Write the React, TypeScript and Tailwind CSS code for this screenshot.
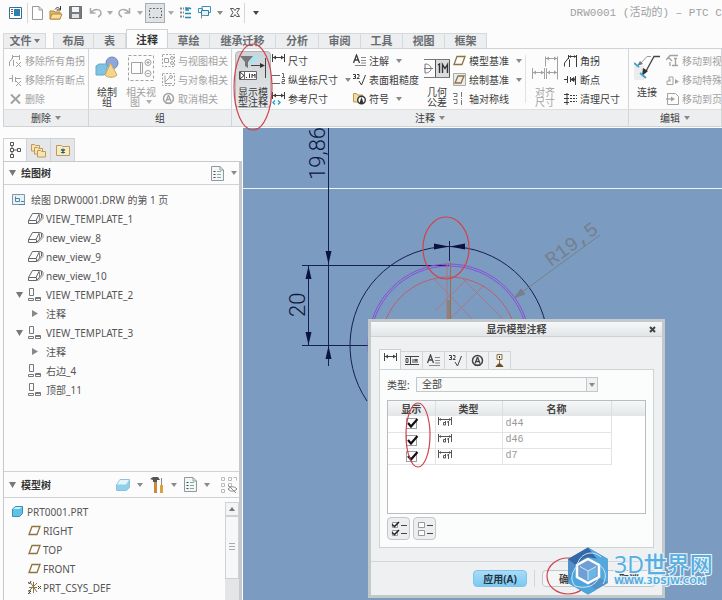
import React from "react";

type Kids = { children?: React.ReactNode };

function Svg({ w, h, children, cls = "" }: Kids & { w: number; h: number; cls?: string }) {
  return (
    <svg width={w} height={h} viewBox={`0 0 ${w} ${h}`} fill="none" stroke="currentColor" className={"shrink-0 " + cls} aria-hidden="true">
      {children}
    </svg>
  );
}

function Caret({ cls = "text-[#8a8a8a]" }: { cls?: string }) {
  return (
    <Svg w={6} h={4} cls={cls}>
      <path d="M0 0h6L3 4z" fill="currentColor" stroke="none" />
    </Svg>
  );
}

/* ---------- small icons ---------- */

const CornerIcon = () => (
  <Svg w={13} h={13}>
    <path d="M.5 12.500V9L4.500 4M4.500 1v4M12.500 13V1M5.500 13V5.500M5 2.500h7" />
    <path d="M5 2.500l2-1.500v3zM12 2.500l-2-1.500v3z" fill="currentColor" stroke="none" />
  </Svg>
);
const CornerXIcon = () => (
  <Svg w={13} h={13}>
    <path d="M.5 12V8L3.500 4M3.500 1v4M10.500 1v5M4 2.500h6M4.500 6v6M7 8l5 5M12 8l-5 5" />
  </Svg>
);
const BreakXIcon = () => (
  <Svg w={13} h={13}>
    <path d="M0 5.500h3M3.500 2v7M6.500 4v5M6 5.500h6M7 8l5 5M12 8l-5 5" />
  </Svg>
);
const BreakIcon = () => (
  <Svg w={13} h={13}>
    <path d="M0 6.500h3M3.500 3v7M6.500 4v5M6 6.500h5M11.500 3v9" />
    <path d="M7 6.500l3-2v4z" fill="currentColor" />
  </Svg>
);
const CrossIcon = () => (
  <Svg w={13} h={13}>
    <path d="M2 2.500l9 9M11 2.500l-9 9" strokeWidth="2" />
  </Svg>
);
const RelViewIcon = () => (
  <Svg w={13} h={13}>
    <path d="M.5.500h12v12H.5z" strokeDasharray="2 1.500" />
    <path d="M2.500 4.500h4v4h-4z" />
    <circle cx="10" cy="4" r="1.500" />
    <circle cx="10" cy="9" r="1.500" />
  </Svg>
);
const RelObjIcon = () => (
  <Svg w={13} h={13}>
    <path d="M.5.500h12v12H.5z" strokeDasharray="2 1.500" />
    <path d="M3 2.500v8h7M3 9l4-4" />
    <circle cx="9" cy="4" r="1.500" />
  </Svg>
);
const SymbolIcon = () => (
  <Svg w={13} h={13}>
    <circle cx="6.500" cy="6.500" r="5" strokeWidth="1.500" />
    <path d="M6.500 3L9 9.500M6.500 3L4 9.500M5 7.500h3" strokeWidth="1.300" />
    <path d="M3 10.500h7L9 12H4z" fill="currentColor" stroke="none" />
  </Svg>
);
const DimIcon = () => (
  <Svg w={13} h={13}>
    <path d="M.5 0v8M12.500 0v8M1 3.500h11" />
    <path d="M1 3.500l3-2v4zM12 3.500l-3-2v4z" fill="currentColor" stroke="none" />
  </Svg>
);
const OrdinateIcon = () => (
  <Svg w={13} h={13}>
    <path d="M0 2.500h8M0 10.500h8M10 .5h1.500V4M10 4.500h3M10 6.500h2.500v2H10v2h3" stroke="#666" />
  </Svg>
);
const RefDimIcon = () => (
  <Svg w={13} h={13}>
    <path d="M.5 0v7M12.500 0v7M1 3.500h11" />
    <path d="M1 3.500l3-2v4zM12 3.500l-3-2v4z" fill="currentColor" stroke="none" />
    <path d="M3 8.500l-2 2 2 2M6 8.500l2 2-2 2" stroke="#2aa5d0" strokeWidth="1.500" />
  </Svg>
);
const NoteIcon = () => (
  <Svg w={13} h={13}>
    <path d="M.5 9L3.500 1l3 8M1.500 6h4" strokeWidth="1.300" />
    <path d="M8 3.500h5M8 6.500h5M2 11.500h11M8 9h5" stroke="#888" />
  </Svg>
);
const RoughIcon = () => (
  <Svg w={13} h={13}>
    <path d="M0 1.500h2.500v2H1h1.500v2H0M4 1.500h2v2l-2 2h2.500M6 8l2.500 4L12.500 2" />
  </Svg>
);
const FolderSymbolIcon = () => (
  <Svg w={13} h={13}>
    <path d="M.5 10V1.500h3l1 1.500h5v7z" fill="#f7dca0" stroke="#b99a55" />
    <circle cx="8.500" cy="8" r="3.800" fill="#fff" stroke="#333" strokeWidth="1.400" />
    <path d="M8.500 5l2 6h-4z" fill="#333" stroke="none" />
  </Svg>
);
const PlaneIcon = () => (
  <Svg w={13} h={13}>
    <path d="M4 2.500h8L9 10.500H1z" stroke="#8d7440" strokeWidth="1.300" />
  </Svg>
);
const DraftPlaneIcon = () => (
  <Svg w={13} h={13}>
    <path d="M.5.500h12v12H.5z" fill="#ececec" stroke="#aaa" />
    <path d="M5 3h6L8 10H2z" stroke="#8d7440" strokeWidth="1.300" />
  </Svg>
);
const AxisIcon = () => (
  <Svg w={13} h={13}>
    <path d="M0 1.500h4v3H1M0 7.500h4v4H1M8.500 0v5M8.500 6v1M8.500 8v5" stroke="#777" />
  </Svg>
);
const CleanIcon = () => (
  <Svg w={13} h={13}>
    <path d="M0 2.500h5M0 6.500h5M0 10.500h5M3 1v12" />
    <path d="M6 3.500h7M6 6.500h7M6 9.500h7" strokeDasharray="2 1" />
  </Svg>
);
const MoveViewIcon = () => (
  <Svg w={13} h={13}>
    <path d="M0 6l4-4.500h8M2 3l4 4M9.500 4v7M8 4.500h3M6 11.500h6M4 8v4" strokeWidth="1.300" />
  </Svg>
);
const MoveSpecialIcon = () => (
  <Svg w={13} h={13}>
    <path d="M1 11.500V8h2V4h4v7.500zM4 6v3" />
    <path d="M9 6l4 2.500L9 11z" fill="currentColor" stroke="none" />
  </Svg>
);
const MovePageIcon = () => (
  <Svg w={13} h={13}>
    <path d="M1.500 1.500h8l3 3v8h-11z" />
    <path d="M0 7h6" strokeWidth="1.300" />
    <path d="M5 4.500L9 7 5 9.500z" fill="currentColor" stroke="none" />
  </Svg>
);

/* ---------- ribbon building blocks ---------- */

function Tool({ icon, label, off, caret }: { icon: React.ReactNode; label: string; off?: boolean; caret?: boolean }) {
  return (
    <button className={"flex h-[19px] items-center gap-[3px] whitespace-nowrap text-left " + (off ? "text-[#a2a2a2]" : "text-[#3c3c3c]")}>
      {icon}
      <span>{label}</span>
      {caret && (
        <span className="ml-1">
          <Caret />
        </span>
      )}
    </button>
  );
}

function BigTool({ icon, children, off, cls }: Kids & { icon: React.ReactNode; off?: boolean; cls: string }) {
  return (
    <button className={"flex flex-col items-center pt-[2px] leading-[10px] " + cls + (off ? " text-[#a2a2a2]" : " text-[#3c3c3c]")}>
      <span className="flex h-[30px] items-center">{icon}</span>
      <span className="pt-1">{children}</span>
    </button>
  );
}

function Group({ title, caret, cls, children }: Kids & { title: string; caret?: boolean; cls: string }) {
  return (
    <section className={"flex flex-col border-r border-[#d3d6d8] " + cls}>
      <div className="flex flex-1 items-start pt-[2px]">{children}</div>
      <div className="flex h-[17px] shrink-0 items-center justify-center gap-1 border-t border-[#dcdfe1] bg-[#eceef0] text-[#3c3c3c]">
        {title}
        {caret && <Caret />}
      </div>
    </section>
  );
}

function Ribbon() {
  return (
    <div className="ml-[3px] flex h-[79px] overflow-hidden border-b border-l border-t border-[#cfd3d5] bg-[#fcfcfd]">
      <Group title="删除" caret cls="w-[85px] shrink-0">
        <div className="flex flex-col pl-[5px]">
          <Tool off icon={<CornerXIcon />} label="移除所有角拐" />
          <Tool off icon={<BreakXIcon />} label="移除所有断点" />
          <Tool off icon={<CrossIcon />} label="删除" />
        </div>
      </Group>

      <Group title="组" cls="w-[143px] shrink-0">
        <BigTool
          cls="w-[36px]"
          icon={
            <Svg w={24} h={24}>
              <circle cx="17" cy="7" r="6" fill="#8da6dd" stroke="#6f86b8" />
              <path d="M1 10l3-2h8v8l-3 3H1z" fill="#7cc3e4" stroke="#6aa7c4" />
              <path d="M15.500 7l6.500 12c-2 3-10 3-12 0z" fill="#f5d48c" stroke="#c9a65c" />
            </Svg>
          }
        >
          绘制
          <br />组
        </BigTool>
        <BigTool
          off
          cls="w-[32px]"
          icon={
            <Svg w={26} h={26}>
              <path d="M.5.500h25v25H.5z" strokeDasharray="3 2" />
              <path d="M3.500 7.500h11v11h-11zM12.500 7.500v11" />
              <circle cx="20" cy="7.500" r="3" />
              <circle cx="20" cy="18.500" r="3" />
              <path d="M18.500 7.500h3M20 6v3M18.500 18.500h3" />
            </Svg>
          }
        >
          相关视
          <br />
          <span className="inline-flex items-center gap-[6px]">
            图 <Caret cls="text-[#b0b0b0]" />
          </span>
        </BigTool>
        <div className="flex flex-col pl-[5px]">
          <Tool off icon={<RelViewIcon />} label="与视图相关" />
          <Tool off icon={<RelObjIcon />} label="与对象相关" />
          <Tool off icon={<SymbolIcon />} label="取消相关" />
        </div>
      </Group>

      <Group title="注释" caret cls="w-[397px] shrink-0">
        <BigTool
          cls="ml-[3px] h-[57px] w-[36px] rounded-sm border border-[#b4b7b9] bg-linear-to-b from-[#cfd3d5] to-[#e6e8ea]"
          icon={
            <Svg w={30} h={27}>
              <path d="M14 1h10L10 12z" fill="#a9e2f3" stroke="none" />
              <path d="M2 1h13l-5 6v6l-3-2V7z" fill="#777" stroke="none" />
              <path d="M13 10.500h13M27.500 3v20" stroke="#444" />
              <path d="M22 8l5 2.500-5 2.500z" fill="#333" stroke="none" />
              <path d="M1.500 16.500h17v8h-17zM6.500 16.500v8" fill="#fff" stroke="#666" />
              <path d="M2 17l4 3.500L2 24zM8 22.500h1M11.500 18.500v4.500M14 23v-4l1.500 2 1.500-2v4" stroke="#333" />
            </Svg>
          }
        >
          显示模
          <br />
          型注释
        </BigTool>
        <div className="flex w-[82px] flex-col pl-[1px]">
          <Tool icon={<DimIcon />} label="尺寸" />
          <Tool icon={<OrdinateIcon />} label="纵坐标尺寸" caret />
          <Tool icon={<RefDimIcon />} label="参考尺寸" />
        </div>
        <div className="flex w-[68px] flex-col">
          <Tool icon={<NoteIcon />} label="注解" caret />
          <Tool icon={<RoughIcon />} label="表面粗糙度" />
          <Tool icon={<FolderSymbolIcon />} label="符号" caret />
        </div>
        <BigTool
          cls="w-[32px]"
          icon={
            <Svg w={26} h={19}>
              <path d="M0 .5h26M0 18.500h26" stroke="#777" />
              <path d="M11 1h15v17H11z" fill="#d9dbdc" stroke="none" />
              <path d="M11.500 1v17M25.500 1v17" stroke="#555" />
              <path d="M1 5v9M1 5c8 0 8 9 0 9M0 9.500h9" stroke="#777" />
              <path d="M14 6l1.500-1v9M18.500 14V5.500l2.500 4 2.500-4V14" stroke="#333" strokeWidth="1.400" />
            </Svg>
          }
        >
          几何
          <br />
          公差
        </BigTool>
        <div className="flex w-[72px] flex-col">
          <Tool icon={<PlaneIcon />} label="模型基准" caret />
          <Tool icon={<DraftPlaneIcon />} label="绘制基准" caret />
          <Tool icon={<AxisIcon />} label="轴对称线" />
        </div>
        <div className="mt-1 h-[48px] border-r border-[#dfe1e3]" />
        <BigTool
          off
          cls="w-[38px]"
          icon={
            <Svg w={26} h={24}>
              <path d="M13.500.500v10M25.500.500v23M14 2.500h11M.5 12v11M12.500 12v11M.5 16.500h12M14.500 12v11M15 16.500h10" />
              <path d="M1 16.500l3-2v4zM12 16.500l-3-2v4zM15 16.500l3-2v4zM25 16.500l-3-2v4zM14 2.500l3-2v4zM25 2.500l-3-2v4z" fill="currentColor" stroke="none" />
            </Svg>
          }
        >
          对齐
          <br />
          尺寸
        </BigTool>
        <div className="flex flex-col">
          <Tool icon={<CornerIcon />} label="角拐" />
          <Tool icon={<BreakIcon />} label="断点" />
          <Tool icon={<CleanIcon />} label="清理尺寸" />
        </div>
      </Group>

      <Group title="编辑" caret cls="min-w-0 flex-1 overflow-hidden">
        <BigTool
          cls="w-[36px] shrink-0"
          icon={
            <Svg w={26} h={26}>
              <path d="M0 11h10v14H0z" fill="#ececec" stroke="none" />
              <path d="M17 1.500h-4L6 9" stroke="#999" />
              <path d="M26 1.500h-6L11 18" stroke="#444" strokeWidth="1.300" />
              <path d="M3 11l3-5 3 3z" fill="#777" stroke="none" />
              <path d="M8 21l1-8 5 3z" fill="#333" stroke="none" />
              <path d="M0 8l5 4M6 18l6 5" stroke="#35a7d8" strokeWidth="1.800" />
            </Svg>
          }
        >
          连接
        </BigTool>
        <div className="flex flex-col pl-[1px]">
          <Tool off icon={<MoveViewIcon />} label="移动到视图" />
          <Tool off icon={<MoveSpecialIcon />} label="移动特殊" />
          <Tool off icon={<MovePageIcon />} label="移动到页面" />
        </div>
      </Group>
    </div>
  );
}

/* ---------- title bar with the quick access buttons ---------- */

function Quick({ cls, label, children }: Kids & { cls: string; label: string }) {
  return (
    <button aria-label={label} className={"flex h-[20px] shrink-0 items-center justify-center " + cls}>
      {children}
    </button>
  );
}

function TitleBar() {
  return (
    <header className="flex h-[25px] shrink-0 items-center overflow-hidden pl-[3px] text-[#555]">
      <Quick cls="w-[25px] border-r border-[#d4d7d9]" label="窗口">
        <Svg w={13} h={12}>
          <path d="M.5.500h12v11H.5z" fill="#fff" stroke="#3c6d8c" />
          <path d="M2 2h2v1H2zM2 4h2v1H2zM2 6h2v1H2z" fill="#3c6d8c" stroke="none" />
          <path d="M5 2h6v7H5z" fill="#2c7fb0" stroke="none" />
        </Svg>
      </Quick>
      <Quick cls="w-[19px]" label="新建">
        <Svg w={11} h={14}>
          <path d="M.5.500H7L10.500 4v9.500H.5zM7 .5V4h3.500" fill="#fff" stroke="#999" />
        </Svg>
      </Quick>
      <Quick cls="w-[18px]" label="打开">
        <Svg w={14} h={14}>
          <path d="M1 13V5h4l1 1h5v7z" fill="#e8b860" stroke="#b38a3f" />
          <path d="M1 13l2-5h10l-2 5z" fill="#fbdf9e" stroke="#b38a3f" />
          <path d="M6 3.500c2-3 4-2 5 0M11.500 0v4h-4" stroke="#333" />
        </Svg>
      </Quick>
      <Quick cls="w-[21px]" label="保存">
        <Svg w={13} h={13}>
          <path d="M.5.500h12v12H.5z" fill="#777c80" stroke="#6a6f73" />
          <path d="M3 1h7v5H3z" fill="#f4f6f7" stroke="none" />
          <path d="M3 8h7v4H3z" fill="#dfe3e6" stroke="none" />
        </Svg>
      </Quick>
      <Quick cls="w-[18px]" label="撤消">
        <Svg w={13} h={10} cls="text-[#aaa]">
          <path d="M1.500 0v5h5M2 5c3-5 10-4 10 0 0 2-1 3-3 4" strokeWidth="1.500" />
        </Svg>
      </Quick>
      <Quick cls="w-[11px]" label="撤消列表"><Caret cls="text-[#aaa]" /></Quick>
      <Quick cls="w-[19px]" label="重做">
        <Svg w={13} h={10} cls="text-[#aaa]">
          <path d="M11.500 0v5h-5M11 5C8 0 1 1 1 5c0 2 1 3 3 4" strokeWidth="1.500" />
        </Svg>
      </Quick>
      <Quick cls="w-[11px]" label="重做列表"><Caret cls="text-[#aaa]" /></Quick>
      <Quick cls="w-[20px] border border-[#a9adb0] bg-[#e0e3e5]" label="选择">
        <Svg w={13} h={10}>
          <path d="M.5.500h12v9H.5z" strokeDasharray="2 1.500" stroke="#666" />
        </Svg>
      </Quick>
      <Quick cls="w-[11px]" label="选择方式"><Caret cls="text-[#aaa]" /></Quick>
      <Quick cls="w-[19px]" label="重新生成">
        <Svg w={13} h={13}>
          <path d="M1 2.500h4M1 6.500h4M1 10.500h4" stroke="#888" strokeWidth="2" strokeDasharray="2 1" />
          <path d="M7 1v3h3M7 4c1-3 4-2 5-1M6 7.500h6M6 11.500h6" stroke="#2389b5" strokeWidth="1.400" />
        </Svg>
      </Quick>
      <Quick cls="w-[19px]" label="窗口列表">
        <Svg w={13} h={13}>
          <path d="M4 .5h8.500v6H4zM.5 2.500h4v4h-4z" stroke="#3d91b8" fill="#fff" />
          <path d="M3.500 4.500h7v5h-7z" stroke="#2b7fa8" fill="#dff1f9" />
          <path d="M3.500 12.500v-3h5" stroke="#888" />
        </Svg>
      </Quick>
      <Quick cls="w-[11px]" label="更多窗口"><Caret /></Quick>
      <Quick cls="w-[20px] border-r border-[#d4d7d9]" label="关闭窗口">
        <Svg w={10} h={9}>
          <path d="M.5.500h3L5 2.500 6.500.500h3L7 4.500l2.500 4h-3L5 6.500l-1.500 2h-3L3 4.500z" stroke="#555" />
        </Svg>
      </Quick>
      <Quick cls="w-[22px]" label="自定义工具栏"><Caret cls="text-[#444]" /></Quick>
      <h1 className="ml-auto w-[152px] shrink-0 overflow-hidden whitespace-nowrap font-[Liberation_Mono,Noto_Sans_CJK_SC,monospace] text-[11px] text-[#a0a0a0]">
        DRW0001 (活动的) – PTC Creo
      </h1>
    </header>
  );
}

function MenuTabs() {
  const tab = "h-[15px] shrink-0 border-r border-t border-[#d6d9db] bg-[#eceef0] leading-[14px]";
  return (
    <nav className="flex h-[23px] shrink-0 items-end pl-[3px] text-[11px] font-bold text-[#6a6d70]">
      <button className={tab + " mr-[7px] flex w-[43px] items-center justify-center gap-[2px] border-l"}>
        文件 <Caret cls="text-[#777]" />
      </button>
      <button className={tab + " w-[41px] border-l"}>布局</button>
      <button className={tab + " w-[32px]"}>表</button>
      <button className="h-[19px] w-[42px] shrink-0 border-x border-t border-[#cfd3d5] bg-[#fcfcfd] pt-[2px] leading-[16px] text-[#333]">注释</button>
      <button className={tab + " w-[42px]"}>草绘</button>
      <button className={tab + " w-[66px]"}>继承迁移</button>
      <button className={tab + " w-[43px]"}>分析</button>
      <button className={tab + " w-[42px]"}>审阅</button>
      <button className={tab + " w-[42px]"}>工具</button>
      <button className={tab + " w-[42px]"}>视图</button>
      <button className={tab + " w-[42px]"}>框架</button>
    </nav>
  );
}

/* ---------- side bar ---------- */

const ViewIcon = () => (
  <Svg w={16} h={13} cls="text-[#666]">
    <path d="M4.500 1.500h7L8 8.500H.5zM.5 8.500v3h8V8.500M8.500 11.500l5-5.500V2l-2-.5" />
    <path d="M13.500 2l1.500 1v3.500L9.500 12M11.500 3v5" stroke="#888" />
  </Svg>
);
const MultiViewIcon = () => (
  <Svg w={14} h={13} cls="text-[#777]">
    <path d="M1.500.500h4v7h-4zM.5 10.500h5v2h-5zM7.500 9.500h5v3h-5zM7.500 10.500h5" />
  </Svg>
);
const SheetIcon = () => (
  <Svg w={14} h={12}>
    <path d="M.5.500h12v10H.5z" fill="#e8f1f6" stroke="#8195a3" />
    <path d="M3.500 2.500v5h4v-3h-4M9 7.500h3M7 10.500h6" stroke="#4c86a8" />
  </Svg>
);
const ListIcon = () => (
  <Svg w={13} h={15}>
    <path d="M.5.500H9L12.500 4v10.500H.5zM9 .5V4h3.500" fill="#f4f7f8" stroke="#92999e" />
    <path d="M2.500 5.500h2M2.500 8.500h2M2.500 11.500h2" stroke="#444" />
    <path d="M6 5.500h4M6 8.500h4M6 11.500h4" stroke="#7fae9d" />
  </Svg>
);
const Down = () => (
  <Svg w={7} h={6}>
    <path d="M0 0h7L3.500 6z" fill="#777" stroke="none" />
  </Svg>
);
const Right = () => (
  <Svg w={6} h={7}>
    <path d="M0 0v7l6-3.500z" fill="#888" stroke="none" />
  </Svg>
);

type Row = { label: string; kind: "view" | "multi" | "open" | "note" };
const drawingRows: Row[] = [
  { label: "VIEW_TEMPLATE_1", kind: "view" },
  { label: "new_view_8", kind: "view" },
  { label: "new_view_9", kind: "view" },
  { label: "new_view_10", kind: "view" },
  { label: "VIEW_TEMPLATE_2", kind: "open" },
  { label: "注释", kind: "note" },
  { label: "VIEW_TEMPLATE_3", kind: "open" },
  { label: "注释", kind: "note" },
  { label: "右边_4", kind: "multi" },
  { label: "顶部_11", kind: "multi" },
];

function TreeRow({ row }: { row: Row }) {
  return (
    <li className="flex h-[19px] items-center">
      <span className="flex w-[24px] shrink-0 justify-center pl-[6px]">{row.kind === "open" && <Down />}</span>
      <span className="flex w-[18px] shrink-0 items-center justify-start">
        {row.kind === "view" && <ViewIcon />}
        {(row.kind === "open" || row.kind === "multi") && <MultiViewIcon />}
        {row.kind === "note" && (
          <span className="pl-[4px]">
            <Right />
          </span>
        )}
      </span>
      <span>{row.label}</span>
    </li>
  );
}

function SideBar() {
  const tab = "flex h-[23px] w-[24px] items-center justify-center border-r border-t border-[#d0d3d5]";
  return (
    <aside className="flex w-[243px] shrink-0 flex-col pl-[3px] pt-[11px] text-[#555]">
      <div className="flex shrink-0" role="tablist">
        <button role="tab" aria-label="模型树" className={tab + " border-l"}>
          <Svg w={12} h={16} cls="text-[#555]">
            <path d="M1.500.500h3v3h-3zM1.500 6.500h3v3h-3zM1.500 12.500h3v3h-3zM8.500 6.500h3v3h-3zM3 4v2M3 10v2M5 8h3" />
          </Svg>
        </button>
        <button role="tab" aria-label="文件夹浏览器" className={tab + " bg-[#e4e6e8]"}>
          <Svg w={16} h={15}>
            <path d="M.5 8V1.500h3l1 1h4V8z" fill="#fbe3ae" stroke="#b99a63" />
            <path d="M3.500 11V4.500h3l1 1h4V11z" fill="#fbe3ae" stroke="#b99a63" />
            <path d="M6.500 14V7.500h3l1 1h4V14z" fill="#fbe3ae" stroke="#b99a63" />
          </Svg>
        </button>
        <button role="tab" aria-label="收藏夹" className={tab + " bg-[#e4e6e8]"}>
          <Svg w={14} h={12}>
            <path d="M.5 11.500V1.500h5l1 1h7v9z" fill="#fbe9bf" stroke="#b99a63" />
            <path d="M7 4.500v5M5 5.500l4 3M9 5.500l-4 3" stroke="#1f5f70" strokeWidth="1.200" />
          </Svg>
        </button>
      </div>

      <div className="mr-[1px] flex min-h-0 flex-1 flex-col border-l border-r-[3px] border-t border-[#c6cacd] bg-[#fcfcfd]">
        <div className="flex h-[23px] shrink-0 items-center border-b border-[#cfd3d5] pl-[5px] pr-[2px]">
          <Down />
          <h2 className="ml-[5px] font-bold text-[#333]">绘图树</h2>
          <button aria-label="设置" className="ml-auto flex items-center gap-[7px]">
            <ListIcon />
            <Caret />
          </button>
        </div>
        <ul className="min-h-0 flex-1 overflow-hidden pt-[5px]">
          <li className="flex h-[19px] items-center gap-[5px] pl-[8px]">
            <SheetIcon />
            绘图 DRW0001.DRW 的第 1 页
          </li>
          {drawingRows.map((r, i) => (
            <TreeRow key={i} row={r} />
          ))}
        </ul>

        <div className="flex h-[27px] shrink-0 items-center border-b border-t border-[#cfd3d5] pl-[5px] pr-[2px]">
          <Down />
          <h2 className="ml-[5px] font-bold text-[#333]">模型树</h2>
          <div className="ml-auto flex items-center gap-[7px]">
            <button aria-label="显示" className="flex items-center gap-[6px]">
              <Svg w={16} h={14}>
                <path d="M5 1.500h9.500v8l-3 3H1.500V7z" fill="#8fd0ec" stroke="#8fc1d8" strokeLinejoin="round" />
                <path d="M5 2h9l-3 4.500H2z" fill="#e2f5fb" stroke="none" />
              </Svg>
              <Caret />
            </button>
            <button aria-label="工具" className="flex items-center gap-[7px]">
              <Svg w={14} h={16}>
                <path d="M0 2l3-2h5l2 3H7v2H3V3z" fill="#555" stroke="none" />
                <path d="M4 5h3v11H4z" fill="#c98a3c" stroke="none" />
                <path d="M11.500 1v7" stroke="#888" />
                <path d="M10 8h3v8h-3z" fill="#dba040" stroke="none" />
              </Svg>
              <Caret />
            </button>
            <button aria-label="设置" className="flex items-center gap-[7px]">
              <ListIcon />
              <Caret />
            </button>
            <button aria-label="过滤" className="ml-1">
              <Svg w={16} h={16} cls="text-[#bbb]">
                <path d="M.5.500h3v3h-3zM.5 6.500h3v3h-3zM.5 12.500h3v3h-3zM7.500.500h3v3h-3zM7.500 6.500h3v3h-3zM12.500.500h3v3" />
                <path d="M7 12c3-3 6-3 9 0-3 3-6 3-9 0M7 8l8 8" stroke="#888" />
              </Svg>
            </button>
          </div>
        </div>
        <div className="flex h-[102px] shrink-0 pt-[4px]">
          <ul className="min-w-0 flex-1 overflow-hidden">
            <li className="flex h-[19px] items-center gap-[4px] pl-[8px]">
              <Svg w={11} h={11}>
                <path d="M.5 3l3-2.500h7v7l-3 3h-7z" fill="#5fc3e6" stroke="#3b8fb0" />
                <path d="M1 3l3-2h6L7.500 3z" fill="#c8effa" stroke="none" />
              </Svg>
              PRT0001.PRT
            </li>
            {["RIGHT", "TOP", "FRONT"].map((n) => (
              <li key={n} className="flex h-[19px] items-center gap-[2px] pl-[24px]">
                <PlaneIcon />
                {n}
              </li>
            ))}
            <li className="flex h-[19px] items-center gap-[2px] pl-[24px]">
              <Svg w={13} h={13}>
                <path d="M5.500 1v11M1 6.500h8M2 1l7 10M9 2L1 10" stroke="#8d7440" />
                <path d="M0 1l1.500 2L3 0M0 10h3l-3 3h3M10 5l3 3M13 5l-3 3" stroke="#444" />
              </Svg>
              PRT_CSYS_DEF
            </li>
          </ul>
          <div className="flex w-[14px] shrink-0 flex-col bg-[#e3e5e7]">
            <button aria-label="向上滚动" className="flex h-[14px] items-center justify-center border border-[#cfd2d4] bg-[#f3f4f5]">
              <Svg w={6} h={4}>
                <path d="M0 4h6L3 0z" fill="#777" stroke="none" />
              </Svg>
            </button>
            <div className="flex h-[63px] items-center justify-center border border-[#cfd2d4] bg-[#f6f7f8]">
              <Svg w={6} h={9} cls="text-[#aaa]">
                <path d="M0 .5h6M0 3.500h6M0 6.500h6" />
              </Svg>
            </div>
          </div>
        </div>
      </div>
    </aside>
  );
}

/* ---------- drawing; page units shifted so the sheet's own corner is 243,128 ---------- */

function Sheet() {
  return (
    <svg className="absolute inset-0 h-full w-full" fill="none" aria-label="图纸">
      <rect y="60" width="100%" height="1" fill="#eef3f8" />
      <g transform="translate(-243 -128)">
        <g stroke="#14204f">
          <path d="M328.500 120v246M302 265.500h147M302 345.500h68M308.500 266v80" />
          <path d="M367 401A99 99 0 1 1 531 401" />
          <path d="M449.500 241v20" />
        </g>
        <g fill="#0b1440">
          <path d="M328.500 264l-3-13h6zM328.500 346l-3 13h6zM308.500 266l-3 13h6zM308.500 345l-3-13h6zM449 246.500l-15-3v6zM450 246.500l15-3v6z" />
          <g className="font-[Roboto,sans-serif] text-[22px] font-light">
            <text transform="translate(325 180) rotate(-90)">19,86</text>
            <text transform="translate(305 317) rotate(-90)">20</text>
          </g>
        </g>
        <circle cx="449" cy="345" r="81" stroke="#8a4fd6" />
        <circle cx="449" cy="345" r="79" stroke="#8a4fd6" />
        <circle cx="449" cy="345" r="68" stroke="#b9606c" />
        <path d="M434 279l40 42M484 285l-36 36M466 280l-31 31M462 278l42 42M447 262v60" stroke="#a87888" />
        <path d="M450.500 262v60" stroke="#a06c50" />
        <path d="M448.500 300v20" stroke="#8c8478" strokeWidth="3" />
        <g stroke="#77808c">
          <path d="M600 235l-86 63" />
          <path d="M514 298l7-9 4 5z" fill="#77808c" />
        </g>
        <text transform="translate(551 267) rotate(-36)" fill="#74808f" className="font-[Liberation_Mono,monospace] text-[20px]">R19,5</text>
      </g>
    </svg>
  );
}

/* ---------- dialog ---------- */

const DimRowIcon = () => (
  <Svg w={14} h={9} cls="text-[#555]">
    <path d="M.5 0v8M13.500 0v8M1 2.500h12M5.500 8V5.500h2V8h-2M7.500 4v4M10.500 4v5M9 5h1" />
    <path d="M1 2.500l2-1.500v3zM13 2.500l-2-1.500v3z" fill="currentColor" stroke="none" />
  </Svg>
);

function Dialog() {
  const tab = "flex h-[18px] w-[22px] items-center justify-center border-r border-t border-[#d3d6d8] bg-[#eff1f2]";
  const push = "h-[17px] rounded-sm border font-bold";
  return (
    <section
      role="dialog"
      aria-label="显示模型注释"
      className="absolute left-[125px] top-[191px] w-[297px] border-[3px] border-[#c3c8cb] bg-[#eef0f2] text-[#444]"
    >
      <div className="relative flex h-[15px] items-center justify-center border-b border-[#cfd2d4] bg-linear-to-b from-[#f6f7f8] to-[#e2e5e7]">
        <h2 className="font-bold">显示模型注释</h2>
        <button aria-label="关闭" className="absolute right-[6px]">
          <Svg w={7} h={7}>
            <path d="M1 1l5 5M6 1L1 6" strokeWidth="2" />
          </Svg>
        </button>
      </div>

      <div className="px-[8px] pt-[12px]">
        <div className="flex items-end" role="tablist">
          <button role="tab" aria-label="尺寸" className="flex h-[20px] w-[22px] items-start justify-center border-x border-t border-[#cdd0d2] bg-[#fbfcfc] pt-[3px]">
            <DimIcon />
          </button>
          <button role="tab" aria-label="几何公差" className={tab}>
            <Svg w={14} h={9}>
              <path d="M0 .5h14M0 8.500h14M5.500 0v9M1 2.500h2v4H1zM8 3v4M10 7V3l1 2 1-2v4" />
            </Svg>
          </button>
          <button role="tab" aria-label="注解" className={tab}><NoteIcon /></button>
          <button role="tab" aria-label="表面粗糙度" className={tab}><RoughIcon /></button>
          <button role="tab" aria-label="符号" className={tab}><SymbolIcon /></button>
          <button role="tab" aria-label="基准" className={tab}>
            <Svg w={9} h={13}>
              <path d="M2 .5h5v5H2zM4.500 6v4" stroke="#8d7440" />
              <path d="M4 2h1v2H4z" fill="#333" stroke="none" />
              <path d="M1 12.500l3-3h1l3 3z" fill="#6f4e25" stroke="#6f4e25" />
            </Svg>
          </button>
        </div>

        <div className="border border-[#d0d3d5] bg-[#fbfcfc] px-[7px] pb-[7px] pt-[7px]">
          <div className="flex items-center">
            <label htmlFor="kind" className="w-[29px]">类型:</label>
            <div className="relative">
              <select id="kind" className="block h-[15px] w-[182px] appearance-none border border-[#c3c7c9] bg-[#f8f9f9] pl-[5px] leading-[13px]">
                <option>全部</option>
              </select>
              <span className="pointer-events-none absolute inset-y-0 right-0 flex w-[12px] items-center justify-center border border-[#c3c7c9] bg-[#eef0f1]">
                <Caret />
              </span>
            </div>
          </div>

          <div className="mt-[8px] h-[114px] border border-[#b9bdc0] bg-white">
            <table className="w-full table-fixed border-collapse">
              <colgroup>
                <col className="w-[47px]" />
                <col className="w-[67px]" />
                <col className="w-[109px]" />
                <col />
              </colgroup>
              <thead>
                <tr className="h-[15px] bg-linear-to-b from-[#f6f7f8] to-[#e3e6e8] leading-[14px]">
                  <th className="border-r border-[#dcdfe1]">显示</th>
                  <th className="border-r border-[#dcdfe1]">类型</th>
                  <th className="border-r border-[#dcdfe1]">名称</th>
                  <th />
                </tr>
              </thead>
              <tbody>
                {["d44", "d46", "d7"].map((n) => (
                  <tr key={n} className="h-[16px] leading-[14px]">
                    <td className="border-b border-r border-[#e2e4e6] p-0">
                      <span className="relative mx-auto block h-[11px] w-[11px]">
                        <input type="checkbox" defaultChecked aria-label={"显示 " + n} className="block h-[11px] w-[11px] appearance-none border border-[#9a9ea1] bg-white" />
                        <svg className="pointer-events-none absolute left-0 top-0 overflow-visible" width="11" height="11" viewBox="0 0 11 11" aria-hidden="true">
                          <path d="M2 5l3 3.500L11.500 1" fill="none" stroke="#111" strokeWidth="2.200" />
                        </svg>
                      </span>
                    </td>
                    <td className="border-b border-r border-[#e2e4e6] p-0 pl-[2px] pt-[1px] align-top leading-[9px]"><span className="block"><DimRowIcon /></span></td>
                    <td className="border-b border-r border-[#e2e4e6] p-0 pl-[3px] font-[Liberation_Mono,monospace] text-[#999]">{n}</td>
                    <td />
                  </tr>
                ))}
              </tbody>
            </table>
          </div>

          <div className="mt-[3px] flex gap-[3px]">
            <button aria-label="全选" className="flex h-[23px] w-[23px] items-center justify-center rounded-sm border border-[#c3c7c9] bg-[#eceef0]">
              <Svg w={16} h={16}>
                <path d="M1.500 1.500h5v5h-5zM1.500 9.500h5v5h-5z" stroke="#999" fill="#fff" />
                <path d="M1 3.500l2.500 2L8 1M1 11.500l2.500 2L8 9" stroke="#222" strokeWidth="1.600" />
                <path d="M10 4.500h6M10 12.500h6" />
              </Svg>
            </button>
            <button aria-label="全不选" className="flex h-[23px] w-[23px] items-center justify-center rounded-sm border border-[#c3c7c9] bg-[#eceef0]">
              <Svg w={16} h={16}>
                <path d="M1.500 1.500h6v5h-6zM1.500 9.500h6v5h-6z" stroke="#999" fill="#fff" />
                <path d="M10 4.500h6M10 12.500h6" />
              </Svg>
            </button>
          </div>
        </div>
      </div>

      <div className="mt-[13px] flex h-[34px] items-center justify-end border-t border-[#d3d6d8] pr-[6px]">
        <button className={push + " w-[54px] border-[#7fc4ea] bg-linear-to-b from-[#a8dcf7] to-[#7cc8f2] leading-[14px] text-[#234]"}>应用(A)</button>
        <span className="mx-[7px] h-[17px] border-r border-[#d3d6d8]" />
        <button className={push + " w-[54px] border-[#c3c7c9] bg-[#f4f5f6] leading-[14px]"}>确定</button>
        <button className={push + " ml-[6px] w-[54px] border-[#c3c7c9] bg-[#f4f5f6] leading-[14px]"}>取消</button>
      </div>
    </section>
  );
}

/* ---------- pen marks and site badge laid over the window ---------- */

function Marks() {
  return (
    <svg className="pointer-events-none absolute inset-0 h-full w-full" fill="none" stroke="#d0444c" strokeWidth="1.200" aria-hidden="true">
      <ellipse cx="253" cy="87" rx="19" ry="43" />
      <ellipse cx="446" cy="248" rx="23" ry="31" />
      <ellipse cx="418" cy="435" rx="12" ry="32" />
      <ellipse cx="568" cy="576" rx="21" ry="18" />
    </svg>
  );
}

function Badge() {
  return (
    <div className="pointer-events-none absolute bottom-[5px] right-[3px] flex items-center gap-[5px]">
      <svg width="42" height="48" viewBox="0 0 42 48" fill="none" aria-hidden="true">
        <path d="M21 .5l20 11.500v24L21 47.500 1 36V12z" fill="#3f86c4" fillOpacity=".9" />
        <path d="M21 .5L41 12v24l-9-6V18L21 12z" fill="#55a8de" />
        <path d="M1 12L21 .5 30 12c-9-3-17-2-19 8z" fill="#3468a8" />
        <path d="M1 36l9-18c0 10 3 16 11 18l8 7-8 4.500z" fill="#4ea5da" />
        <path d="M21 12l11 6v12l-11 6-11-6V18z" stroke="#fff" strokeWidth="2.500" fill="#6f9fd4" />
        <path d="M21 24l8-4.500V29l-8 4.500z" fill="#69b7e4" />
        <path d="M10 18C14 5 26 3 34 10M32 30c-4 10-14 12-24 9M10 19C3 27 4 34 8 39M32 18c7 4 8 12 4 19M13 19.500l8 4.500 8-4.500M21 24v9" stroke="#cfe6f6" />
      </svg>
      <div className="w-[105px] pb-[4px] text-[#58aee0] [paint-order:stroke_fill] [-webkit-text-stroke:2px_#eaf5fb]">
        <p className="whitespace-nowrap font-[Open_Sans,Noto_Sans_CJK_SC,sans-serif] text-[23px] font-medium leading-[24px]">3D世界网</p>
        <p className="whitespace-nowrap font-[DejaVu_Sans,sans-serif] text-[9px] font-bold leading-[10px]">WWW.3DSJW.COM</p>
      </div>
    </div>
  );
}

export default function App() {
  return (
    <div className="relative flex h-screen flex-col overflow-hidden bg-[#fcfcfd] font-[Noto_Sans,Noto_Sans_CJK_SC,sans-serif] text-[10px] leading-[14px]">
      <TitleBar />
      <MenuTabs />
      <div className="shrink-0">
        <Ribbon />
      </div>
      <div className="flex min-h-0 flex-1">
        <SideBar />
        <main className="relative mt-[1px] min-w-0 flex-1 overflow-hidden bg-[#7c9bc0]">
          <Sheet />
          <Dialog />
        </main>
      </div>
      <Marks />
      <Badge />
    </div>
  );
}
